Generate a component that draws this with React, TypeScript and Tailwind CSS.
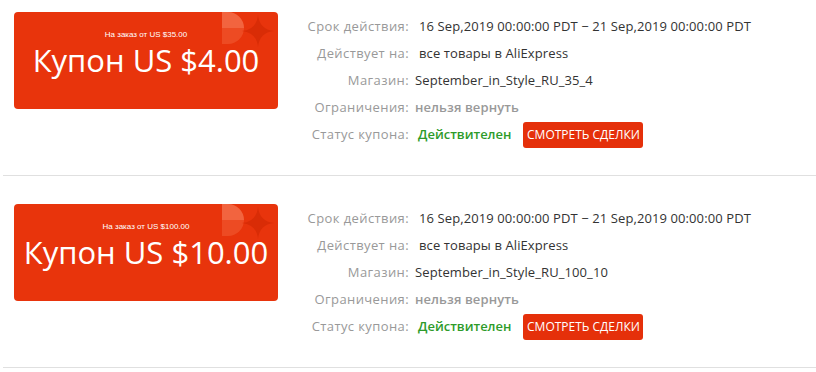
const coupons = [
  {
    min: "На заказ от US $35.00",
    amount: "Купон US $4.00",
    store: "September_in_Style_RU_35_4",
    first: true,
  },
  {
    min: "На заказ от US $100.00",
    amount: "Купон US $10.00",
    store: "September_in_Style_RU_100_10",
    first: false,
  },
];

function Decoration() {
  return (
    <svg
      className="absolute right-0 top-0"
      width="56"
      height="40"
      viewBox="0 0 56 40"
      aria-hidden="true"
    >
      <path d="M0 0 H6 A16 16 0 0 1 22 16 H0 Z" fill="#f2643f" />
      <path d="M0 16 H22 A16 16 0 0 1 6 32 H0 Z" fill="#ed4b23" />
      <path
        d="M36 3 Q37.5 17.5 52 19 Q37.5 20.5 36 35 Q34.5 20.5 20 19 Q34.5 17.5 36 3 Z"
        fill="#d92c06"
      />
    </svg>
  );
}

function Row({ label, children }: { label: string; children: React.ReactNode }) {
  return (
    <div className="flex h-[27px] items-center">
      <span className="w-[137px] shrink-0 pr-[6px] text-right tracking-[0.4px] text-[#999]">
        {label}
      </span>
      {children}
    </div>
  );
}

function CouponItem({ c }: { c: (typeof coupons)[number] }) {
  return (
    <div
      className={`ml-[3px] flex border-b border-[#e0e0e0] pb-[27px] pl-[11px] ${
        c.first ? "pt-[12px]" : "pt-[28px]"
      }`}
    >
      <div className="relative h-[97px] w-[264px] shrink-0 overflow-hidden rounded-[4px] bg-[#e8340c] text-center text-white">
        <Decoration />
        <div className="relative pt-[17px] font-['Liberation_Sans',sans-serif] text-[8px] leading-[12px]">
          {c.min}
        </div>
        <div className="relative mt-[1px] text-[31px] leading-[36px]">{c.amount}</div>
      </div>
      <div className="pt-[1px] text-[13px] tracking-[0.1px] text-[#333]">
        <Row label="Срок действия:">
          <span className="pl-[4px]">16 Sep,2019 00:00:00 PDT − 21 Sep,2019 00:00:00 PDT</span>
        </Row>
        <Row label="Действует на:">
          <span className="pl-[4px]">все товары в AliExpress</span>
        </Row>
        <Row label="Магазин:">
          <span>{c.store}</span>
        </Row>
        <Row label="Ограничения:">
          <span className="font-semibold text-[#999]">нельзя вернуть</span>
        </Row>
        <Row label="Статус купона:">
          <span className="pl-[3px] font-semibold tracking-normal text-[#2e9b2a]">Действителен</span>
          <button className="ml-[12px] h-[26px] w-[120px] rounded-[3px] bg-[#e5300a] text-[12px] tracking-normal text-white">
            СМОТРЕТЬ СДЕЛКИ
          </button>
        </Row>
      </div>
    </div>
  );
}

export default function App() {
  return (
    <div className="h-[372px] w-[816px] overflow-hidden bg-white font-['Open_Sans',sans-serif]">
      {coupons.map((c) => (
        <CouponItem key={c.store} c={c} />
      ))}
    </div>
  );
}
